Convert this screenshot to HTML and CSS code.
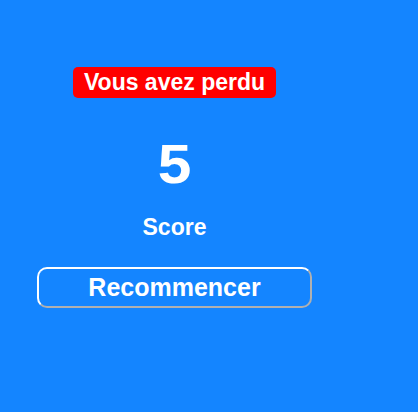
FILE: index.html
```html
<!DOCTYPE html>
<html lang="fr">
<head>
<meta charset="utf-8">
<link rel="stylesheet" href="styles.css">
</head>
<body>
<main class="panel">
  <div class="badge">Vous avez perdu</div>
  <div class="score-value">5</div>
  <div class="score-label">Score</div>
  <button class="restart">Recommencer</button>
</main>
</body>
</html>
```
FILE: styles.css
```css
html, body {
  margin: 0;
  padding: 0;
  background: #1485ff;
  height: 100%;
}
body {
  font-family: "Liberation Sans", Arial, sans-serif;
  color: #fff;
}
.panel {
  width: 275px;
  margin-left: 37px;
  padding-top: 67px;
  display: flex;
  flex-direction: column;
  align-items: center;
}
.badge {
  background: #ff0000;
  border-radius: 5px;
  font-weight: bold;
  font-size: 23px;
  line-height: 25px;
  padding: 3px 11px;
}
.score-value {
  margin-top: 38px;
  font-weight: bold;
  font-size: 56px;
  line-height: 1;
  transform: scaleX(1.08);
}
.score-label {
  margin-top: 24px;
  font-weight: bold;
  font-size: 23px;
  line-height: 1;
}
.restart {
  margin-top: 28px;
  width: 275px;
  height: 41px;
  box-sizing: border-box;
  background: transparent;
  color: #fff;
  font-family: "Liberation Sans", Arial, sans-serif;
  font-weight: bold;
  font-size: 25px;
  border: 2px solid #fff;
  border-right-color: #b0b0b0;
  border-bottom-color: #b0b0b0;
  border-radius: 10px;
  padding: 0;
}
```
